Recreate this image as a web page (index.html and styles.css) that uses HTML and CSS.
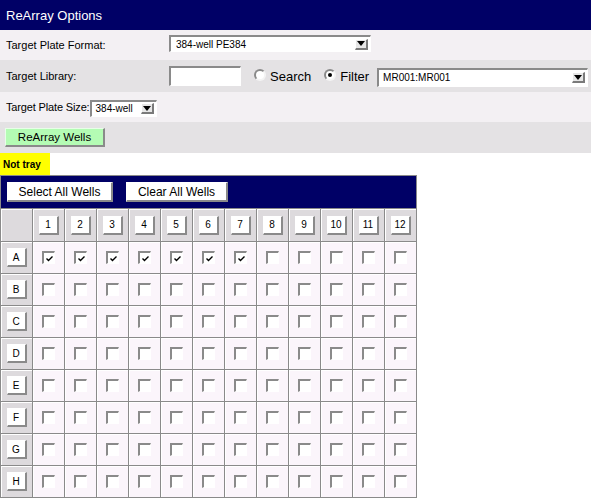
FILE: index.html
```html
<!DOCTYPE html>
<html>
<head>
<meta charset="utf-8">
<link rel="stylesheet" href="styles.css">
</head>
<body>
<div class="title">ReArray Options</div>
<div class="row light r1">
  <span class="label">Target Plate Format:</span>
  <div class="select sel-format"><span class="val">384-well PE384</span><span class="arrow"><svg width="8" height="5" viewBox="0 0 8 5"><path d="M0 0H8L4 5Z" fill="#000"/></svg></span></div>
</div>
<div class="row dark r2">
  <span class="label">Target Library:</span>
  <span class="textbox"></span>
  <span class="opt opt-search"><span class="radio"></span>Search</span>
  <span class="opt opt-filter"><span class="radio on"></span>Filter</span>
  <div class="select sel-lib"><span class="val">MR001:MR001</span><span class="arrow"><svg width="8" height="5" viewBox="0 0 8 5"><path d="M0 0H8L4 5Z" fill="#000"/></svg></span></div>
</div>
<div class="row light r3">
  <span class="label-inline">Target Plate Size:</span>
  <div class="select sel-size"><span class="val">384-well</span><span class="arrow"><svg width="8" height="5" viewBox="0 0 8 5"><path d="M0 0H8L4 5Z" fill="#000"/></svg></span></div>
</div>
<div class="row dark r4">
  <button class="btn green">ReArray Wells</button>
</div>
<div class="notice">Not tray</div>
<table class="wells">
  <tr class="tools"><td colspan="13"><div class="toolbar"><button class="btn wide">Select All Wells</button><button class="btn wide">Clear All Wells</button></div></td></tr>
  <tr class="colhead">
    <td class="hd"></td>
    <td class="hd"><span class="hb">1</span></td><td class="hd"><span class="hb">2</span></td><td class="hd"><span class="hb">3</span></td><td class="hd"><span class="hb">4</span></td><td class="hd"><span class="hb">5</span></td><td class="hd"><span class="hb">6</span></td><td class="hd"><span class="hb">7</span></td><td class="hd"><span class="hb">8</span></td><td class="hd"><span class="hb">9</span></td><td class="hd"><span class="hb">10</span></td><td class="hd"><span class="hb">11</span></td><td class="hd"><span class="hb">12</span></td>
  </tr>
  <tr>
    <td class="hd"><span class="hb">A</span></td>
    <td><span class="cb on"><svg width="9" height="9" viewBox="0 0 9 9"><path d="M1.5 4.5L3.5 6.5L7.5 2.5" fill="none" stroke="#000" stroke-width="1.4"/></svg></span></td>
    <td><span class="cb on"><svg width="9" height="9" viewBox="0 0 9 9"><path d="M1.5 4.5L3.5 6.5L7.5 2.5" fill="none" stroke="#000" stroke-width="1.4"/></svg></span></td>
    <td><span class="cb on"><svg width="9" height="9" viewBox="0 0 9 9"><path d="M1.5 4.5L3.5 6.5L7.5 2.5" fill="none" stroke="#000" stroke-width="1.4"/></svg></span></td>
    <td><span class="cb on"><svg width="9" height="9" viewBox="0 0 9 9"><path d="M1.5 4.5L3.5 6.5L7.5 2.5" fill="none" stroke="#000" stroke-width="1.4"/></svg></span></td>
    <td><span class="cb on"><svg width="9" height="9" viewBox="0 0 9 9"><path d="M1.5 4.5L3.5 6.5L7.5 2.5" fill="none" stroke="#000" stroke-width="1.4"/></svg></span></td>
    <td><span class="cb on"><svg width="9" height="9" viewBox="0 0 9 9"><path d="M1.5 4.5L3.5 6.5L7.5 2.5" fill="none" stroke="#000" stroke-width="1.4"/></svg></span></td>
    <td><span class="cb on"><svg width="9" height="9" viewBox="0 0 9 9"><path d="M1.5 4.5L3.5 6.5L7.5 2.5" fill="none" stroke="#000" stroke-width="1.4"/></svg></span></td>
    <td><span class="cb"></span></td><td><span class="cb"></span></td><td><span class="cb"></span></td><td><span class="cb"></span></td><td><span class="cb"></span></td>
  </tr>
  <tr><td class="hd"><span class="hb">B</span></td><td><span class="cb"></span></td><td><span class="cb"></span></td><td><span class="cb"></span></td><td><span class="cb"></span></td><td><span class="cb"></span></td><td><span class="cb"></span></td><td><span class="cb"></span></td><td><span class="cb"></span></td><td><span class="cb"></span></td><td><span class="cb"></span></td><td><span class="cb"></span></td><td><span class="cb"></span></td></tr>
  <tr><td class="hd"><span class="hb">C</span></td><td><span class="cb"></span></td><td><span class="cb"></span></td><td><span class="cb"></span></td><td><span class="cb"></span></td><td><span class="cb"></span></td><td><span class="cb"></span></td><td><span class="cb"></span></td><td><span class="cb"></span></td><td><span class="cb"></span></td><td><span class="cb"></span></td><td><span class="cb"></span></td><td><span class="cb"></span></td></tr>
  <tr><td class="hd"><span class="hb">D</span></td><td><span class="cb"></span></td><td><span class="cb"></span></td><td><span class="cb"></span></td><td><span class="cb"></span></td><td><span class="cb"></span></td><td><span class="cb"></span></td><td><span class="cb"></span></td><td><span class="cb"></span></td><td><span class="cb"></span></td><td><span class="cb"></span></td><td><span class="cb"></span></td><td><span class="cb"></span></td></tr>
  <tr><td class="hd"><span class="hb">E</span></td><td><span class="cb"></span></td><td><span class="cb"></span></td><td><span class="cb"></span></td><td><span class="cb"></span></td><td><span class="cb"></span></td><td><span class="cb"></span></td><td><span class="cb"></span></td><td><span class="cb"></span></td><td><span class="cb"></span></td><td><span class="cb"></span></td><td><span class="cb"></span></td><td><span class="cb"></span></td></tr>
  <tr><td class="hd"><span class="hb">F</span></td><td><span class="cb"></span></td><td><span class="cb"></span></td><td><span class="cb"></span></td><td><span class="cb"></span></td><td><span class="cb"></span></td><td><span class="cb"></span></td><td><span class="cb"></span></td><td><span class="cb"></span></td><td><span class="cb"></span></td><td><span class="cb"></span></td><td><span class="cb"></span></td><td><span class="cb"></span></td></tr>
  <tr><td class="hd"><span class="hb">G</span></td><td><span class="cb"></span></td><td><span class="cb"></span></td><td><span class="cb"></span></td><td><span class="cb"></span></td><td><span class="cb"></span></td><td><span class="cb"></span></td><td><span class="cb"></span></td><td><span class="cb"></span></td><td><span class="cb"></span></td><td><span class="cb"></span></td><td><span class="cb"></span></td><td><span class="cb"></span></td></tr>
  <tr><td class="hd"><span class="hb">H</span></td><td><span class="cb"></span></td><td><span class="cb"></span></td><td><span class="cb"></span></td><td><span class="cb"></span></td><td><span class="cb"></span></td><td><span class="cb"></span></td><td><span class="cb"></span></td><td><span class="cb"></span></td><td><span class="cb"></span></td><td><span class="cb"></span></td><td><span class="cb"></span></td><td><span class="cb"></span></td></tr>
</table>
</body>
</html>
```
FILE: styles.css
```css
html, body {
  margin: 0;
  padding: 0;
  background: #fff;
  font-family: "Liberation Sans", Arial, sans-serif;
  color: #000;
}

.title {
  background: #000066;
  color: #fff;
  height: 30px;
  font-size: 13px;
  padding-left: 6px;
  display: flex;
  align-items: center;
}

.row {
  display: flex;
  align-items: center;
  padding-left: 6px;
  font-size: 11px;
}
.light { background: #f3f0f3; }
.dark { background: #e4e2e4; }
.r1 { height: 30px; }
.r2 { height: 32px; }
.r3 { height: 30px; }
.r4 { height: 31px; padding-left: 5px; }

.label { width: 163px; }
.label-inline { letter-spacing: -0.15px; }

.select {
  box-sizing: border-box;
  display: flex;
  align-items: center;
  justify-content: space-between;
  background: #fff;
  border-style: solid;
  border-width: 2px 1px 1px 2px;
  border-color: #8a8a8a #fff #fff #8a8a8a;
  font-size: 10px;
  padding: 0 2px 0 5px;
}
.sel-format { width: 202px; height: 17px; margin-top: -3px; }
.sel-lib { width: 211px; height: 19px; margin-left: 8px; margin-top: 2px; padding-left: 4px; }
.sel-size { width: 67px; height: 17px; margin-top: 2px; padding-left: 4px; }

.arrow {
  box-sizing: border-box;
  width: 13px;
  height: 11px;
  background: #e6e6e6;
  border-style: solid;
  border-width: 1px 2px 2px 1px;
  border-color: #fff #7a7a7a #7a7a7a #fff;
  display: flex;
  align-items: center;
  justify-content: center;
}
.arrow svg { display: block; }

.textbox {
  box-sizing: border-box;
  width: 72px;
  height: 20px;
  background: #fff;
  border-style: solid;
  border-width: 2px 1px 1px 2px;
  border-color: #8a8a8a #fff #fff #8a8a8a;
  margin-left: 0;
}

.opt {
  display: flex;
  align-items: center;
  font-size: 13px;
}
.opt-search { margin-left: 13px; }
.opt-filter { margin-left: 13px; }

.radio {
  box-sizing: border-box;
  width: 12px;
  height: 12px;
  border-radius: 50%;
  background: #fff;
  border: 2px solid;
  border-color: #8a8a8a #f4f4f4 #f4f4f4 #8a8a8a;
  margin-right: 4px;
  margin-top: -2px;
  position: relative;
}
.radio.on::after {
  content: "";
  position: absolute;
  left: 2px;
  top: 2px;
  width: 4px;
  height: 4px;
  border-radius: 50%;
  background: #000;
}

.btn {
  box-sizing: border-box;
  font-family: "Liberation Sans", Arial, sans-serif;
  font-size: 12px;
  color: #000;
  background: #fff;
  border-style: solid;
  border-width: 1px 2px 2px 1px;
  border-color: #fff #8a8a8a #8a8a8a #fff;
  padding: 0;
  margin: 0;
  height: 20px;
  display: inline-flex;
  align-items: center;
  justify-content: center;
}
.green {
  background: #b4fcb4;
  width: 100px;
  height: 19px;
  font-size: 11.5px;
  border-color: #e8ffe8 #8a8a8a #8a8a8a #e8ffe8;
}

.notice {
  background: #ffff00;
  width: 50px;
  height: 22px;
  font-size: 10px;
  font-weight: bold;
  display: flex;
  align-items: center;
  padding-left: 3px;
  box-sizing: border-box;
}

.wells {
  border-collapse: separate;
  border-spacing: 0;
  border-left: 1px solid #8a8a8a;
  border-top: 1px solid #8a8a8a;
}
.wells td {
  box-sizing: border-box;
  width: 32px;
  height: 32px;
  padding: 0;
  border-right: 1px solid #8a8a8a;
  border-bottom: 1px solid #8a8a8a;
  box-shadow: inset 1px 1px 0 #fff;
  background: #fbf5fb;
  text-align: center;
  vertical-align: middle;
}
.wells td.hd { background: #dddadd; }
.wells tr.colhead td { height: 33px; }
.wells tr.tools td {
  background: #000066;
  height: 33px;
  box-shadow: none;
  text-align: left;
}
.toolbar {
  display: flex;
  gap: 13px;
  padding-left: 6px;
}
.wide:first-child { width: 106px; }
.wide:last-child { width: 102px; }

.hb {
  box-sizing: border-box;
  display: inline-flex;
  align-items: center;
  justify-content: center;
  width: 20px;
  height: 19px;
  background: #fff;
  border-style: solid;
  border-width: 1px 2px 2px 1px;
  border-color: #fff #8a8a8a #8a8a8a #fff;
  font-size: 10px;
  vertical-align: middle;
}

.cb {
  box-sizing: border-box;
  display: inline-flex;
  align-items: center;
  justify-content: center;
  width: 13px;
  height: 13px;
  background: #fff;
  border-style: solid;
  border-width: 2px 1px 1px 2px;
  border-color: #8a8a8a #fff #fff #8a8a8a;
  vertical-align: middle;
  margin-top: -1px;
}
.cb svg { display: block; }
```
